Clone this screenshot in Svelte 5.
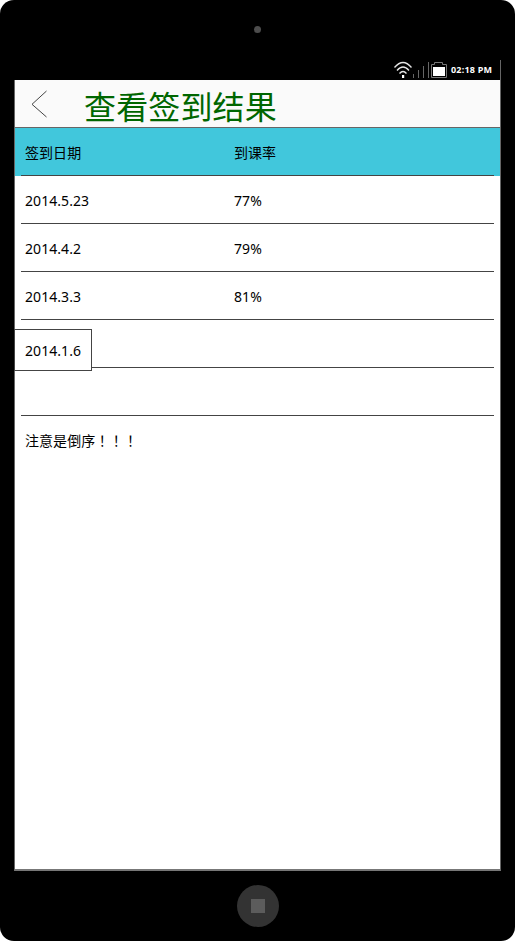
<script>
  const rows = [
    { date: '签到日期', rate: '到课率', head: true },
    { date: '2014.5.23', rate: '77%' },
    { date: '2014.4.2', rate: '79%' },
    { date: '2014.3.3', rate: '81%' },
    { date: '', rate: '' },
    { date: '', rate: '' },
  ];
</script>

<div class="phone">
  <div class="top"><span class="camera"></span></div>
  <div class="status">
    <svg width="56" height="20" viewBox="0 0 56 20" fill="none">
      <g stroke="#e4e4e4" stroke-width="1.3">
        <path d="M1.500 7.500Q10 -2.500 18.500 7.500" />
        <path d="M4 10.500Q10 3.500 16 10.500" />
        <path d="M6.500 13.500Q10 9.500 13.500 13.500" />
      </g>
      <rect x="9" y="15" width="2.200" height="3" fill="#fff" />
      <path d="M20.500 14V18M25.500 10V18M30.500 6V18M35.500 2V18" stroke="#666" />
      <path d="M38.500 4.500H41.500V2.500H49.500V4.500H53.500V17.500H38.500Z" stroke="#777" />
      <rect x="40" y="7" width="12" height="9" fill="#fff" />
    </svg>
    <span class="time">02:18 PM</span>
  </div>
  <main class="screen">
    <header>
      <svg width="16" height="28" viewBox="0 0 16 28" fill="none">
        <path d="M15.500 1L1 14.300L15.500 27" stroke="#444" />
      </svg>
      <h1>查看签到结果</h1>
    </header>
    <div class="table">
      {#each rows as row}
        <div class="row" class:head={row.head}>
          <span class="date">{row.date}</span>
          <span>{row.rate}</span>
        </div>
      {/each}
      <div class="floating">2014.1.6</div>
    </div>
    <p>注意是倒序<span class="marks">！！！</span></p>
  </main>
  <div class="bottom"><span class="home"><i></i></span></div>
</div>

<style>
  :global(body) { background: #fff; }
  .phone {
    width: 515px;
    height: 941px;
    box-sizing: border-box;
    background: #000;
    border-radius: 14px;
    overflow: hidden;
    display: flex;
    flex-direction: column;
    font: 14px/20px "Noto Sans", "Noto Sans CJK SC", sans-serif;
    letter-spacing: 0.06px;
    color: #000;
  }
  .top { height: 60px; display: flex; justify-content: center; }
  .camera { width: 7px; height: 7px; margin-top: 26px; border-radius: 50%; background: #4d4d4d; }
  .status {
    height: 20px;
    margin: 0 14px;
    padding-right: 8px;
    border-right: 1px solid #666;
    display: flex;
    justify-content: flex-end;
  }
  .time {
    margin-left: 2px;
    width: 41px;
    white-space: nowrap;
    color: #fff;
    font: bold 9px/20px "Noto Sans", sans-serif;
    letter-spacing: 0.2px;
  }
  .screen {
    height: 791px;
    margin: 0 14px;
    box-sizing: border-box;
    border: 1px solid #666;
    border-top: 0;
    border-bottom: 2px solid #777;
    background: #fff;
  }
  header {
    height: 48px;
    box-sizing: border-box;
    background: #fafafa;
    border-bottom: 1px solid #666;
    display: flex;
    align-items: flex-start;
    padding-left: 16px;
  }
  header svg { margin-top: 10px; }
  h1 {
    margin: 2px 0 0 37px;
    font: 400 32px/46px "Noto Sans CJK SC", sans-serif;
    letter-spacing: 0.15px;
    color: #060;
  }
  .table { position: relative; }
  .row {
    height: 48px;
    box-sizing: border-box;
    padding: 15px 10px 0;
    display: flex;
    background: linear-gradient(#444, #444) 6px 47px / 473px 1px no-repeat;
  }
  .head { background-color: #41c7dc; }
  .date { width: 209px; }
  .floating {
    position: absolute;
    left: -1px;
    top: 201px;
    width: 78px;
    height: 42px;
    box-sizing: border-box;
    padding: 11px 10px 0;
    border: 1px solid #444;
    background: #fff;
  }
  p { margin: 14px 10px; }
  .marks { font-family: "Noto Sans CJK TC", sans-serif; }
  .bottom { flex: 1; display: flex; justify-content: center; }
  .home {
    width: 42px;
    height: 42px;
    margin-top: 14px;
    border-radius: 50%;
    background: #333;
    display: flex;
    align-items: center;
    justify-content: center;
  }
  .home i { width: 14px; height: 14px; background: #5c5c5c; }
</style>
